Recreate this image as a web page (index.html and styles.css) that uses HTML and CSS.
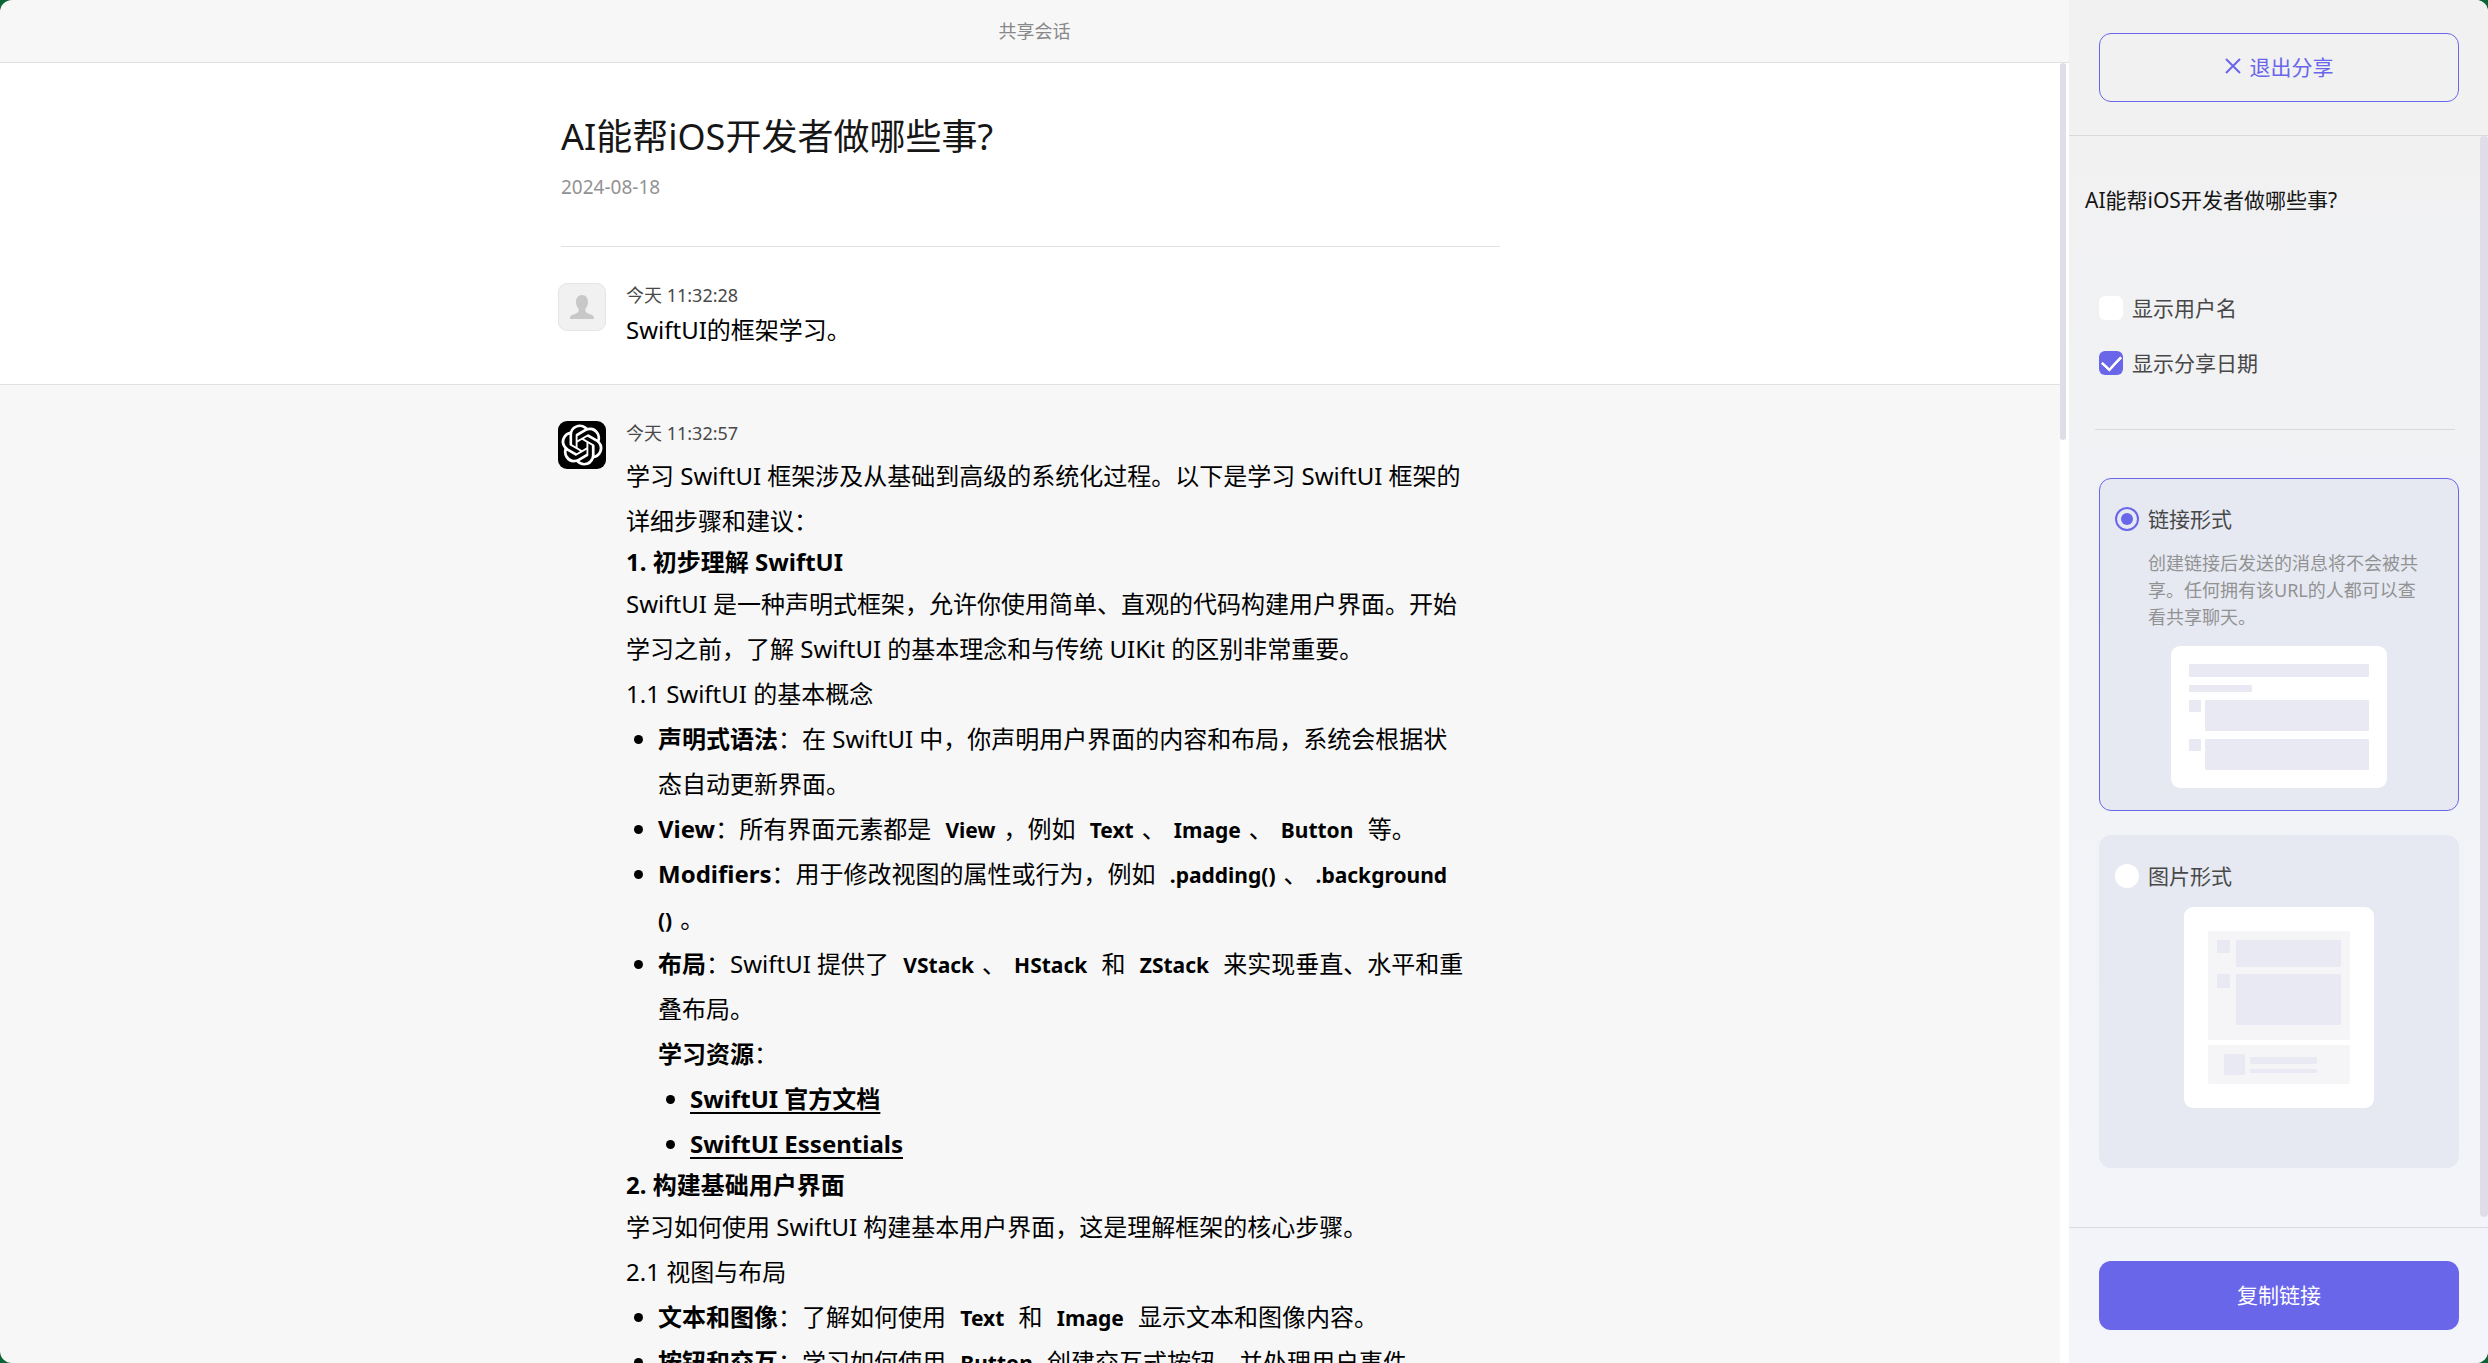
FILE: index.html
```
<!DOCTYPE html>
<html lang="zh-CN">
<head>
    <meta charset="UTF-8">
    <meta name="viewport" content="width=device-width, initial-scale=1.0">
    <title>共享会话</title>
    <link rel="stylesheet" href="styles.css">
</head>
<body>
    <div class="app">
        <main class="chat">
            <header class="chat-header">共享会话</header>
            <div class="chat-body">
                <div class="chat-scroll">
                    <section class="intro">
                        <div class="column">
                            <div class="headline">
                                <h1>AI能帮iOS开发者做哪些事?</h1>
                                <p class="date">2024-08-18</p>
                            </div>
                            <article class="message">
                                <svg class="avatar avatar-user" viewBox="1 1 46 46" aria-hidden="true">
                                    <path d="M24 12c3.600 0 6 2.900 6 6.800 0 3.200-1.200 5.600-2.600 7v2c0 1 .6 1.700 1.600 2.200l4.800 2.100c1.500.7 2.200 1.500 2.200 2.700v.7c0 .4-.2.500-.6.500H12.600c-.4 0-.6-.1-.6-.5v-.7c0-1.200.7-2 2.200-2.700l4.800-2.100c1-.5 1.600-1.200 1.600-2.200v-2c-1.400-1.400-2.600-3.800-2.600-7 0-3.900 2.400-6.800 6-6.800z"/>
                                </svg>
                                <div class="message-content">
                                    <p class="time">今天 11:32:28</p>
                                    <p class="question">SwiftUI的框架学习。</p>
                                </div>
                            </article>
                        </div>
                    </section>

                    <section class="reply">
                        <div class="column">
                            <article class="message">
                                <svg class="avatar avatar-bot" viewBox="-2 -2 28 28" aria-hidden="true">
                                    <path d="M22.2819 9.8211a5.9847 5.9847 0 0 0-.5157-4.9108 6.0462 6.0462 0 0 0-6.5098-2.9A6.0651 6.0651 0 0 0 4.9807 4.1818a5.9847 5.9847 0 0 0-3.9977 2.9 6.0462 6.0462 0 0 0 .7427 7.0966 5.98 5.98 0 0 0 .511 4.9107 6.051 6.051 0 0 0 6.5146 2.9001A5.9847 5.9847 0 0 0 13.2599 24a6.0557 6.0557 0 0 0 5.7718-4.2058 5.9894 5.9894 0 0 0 3.9977-2.9001 6.0557 6.0557 0 0 0-.7475-7.0729zm-9.022 12.6081a4.4755 4.4755 0 0 1-2.8764-1.0408l.1419-.0804 4.7783-2.7582a.7948.7948 0 0 0 .3927-.6813v-6.7369l2.02 1.1686a.071.071 0 0 1 .038.052v5.5826a4.504 4.504 0 0 1-4.4945 4.4944zm-9.6607-4.1254a4.4708 4.4708 0 0 1-.5346-3.0137l.142.0852 4.783 2.7582a.7712.7712 0 0 0 .7806 0l5.8428-3.3685v2.3324a.0804.0804 0 0 1-.0332.0615L9.74 19.9502a4.4992 4.4992 0 0 1-6.1408-1.6464zM2.3408 7.8956a4.485 4.485 0 0 1 2.3655-1.9728V11.6a.7664.7664 0 0 0 .3879.6765l5.8144 3.3543-2.0201 1.1685a.0757.0757 0 0 1-.071 0l-4.8303-2.7865A4.504 4.504 0 0 1 2.3408 7.872zm16.5963 3.8558L13.1038 8.364 15.1192 7.2a.0757.0757 0 0 1 .071 0l4.8303 2.7913a4.4944 4.4944 0 0 1-.6765 8.1042v-5.6772a.79.79 0 0 0-.407-.667zm2.0107-3.0231l-.142-.0852-4.7735-2.7818a.7759.7759 0 0 0-.7854 0L9.409 9.2297V6.8974a.0662.0662 0 0 1 .0284-.0615l4.8303-2.7866a4.4992 4.4992 0 0 1 6.6802 4.66zM8.3065 12.863l-2.02-1.1638a.0804.0804 0 0 1-.038-.0567V6.0742a4.4992 4.4992 0 0 1 7.3757-3.4537l-.142.0805L8.704 5.459a.7948.7948 0 0 0-.3927.6813zm1.0976-2.3654l2.602-1.4998 2.6069 1.4998v2.9994l-2.5974 1.4997-2.6067-1.4997Z"/>
                                </svg>
                                <div class="message-content">
                                    <p class="time">今天 11:32:57</p>
                                    <div class="markdown">
                                        <p>学习 SwiftUI 框架涉及从基础到高级的系统化过程。以下是学习 SwiftUI 框架的详细步骤和建议：</p>
                                        <h3>1. 初步理解 SwiftUI</h3>
                                        <p>SwiftUI 是一种声明式框架，允许你使用简单、直观的代码构建用户界面。开始学习之前，了解 SwiftUI 的基本理念和与传统 UIKit 的区别非常重要。</p>
                                        <p>1.1 SwiftUI 的基本概念</p>
                                        <ul>
                                            <li><strong>声明式语法</strong>：在 SwiftUI 中，你声明用户界面的内容和布局，系统会根据状态自动更新界面。</li>
                                            <li><strong>View</strong>：所有界面元素都是 <code>View</code>，例如 <code>Text</code>、<code>Image</code>、<code>Button</code> 等。</li>
                                            <li><strong>Modifiers</strong>：用于修改视图的属性或行为，例如 <code>.padding()</code>、<code>.background<wbr>()</code>。</li>
                                            <li><strong>布局</strong>：SwiftUI 提供了 <code>VStack</code>、<code>HStack</code> 和 <code>ZStack</code> 来实现垂直、水平和重叠布局。<br><strong>学习资源</strong>：
                                                <ul>
                                                    <li><a href="#">SwiftUI 官方文档</a></li>
                                                    <li><a href="#">SwiftUI Essentials</a></li>
                                                </ul>
                                            </li>
                                        </ul>
                                        <h3>2. 构建基础用户界面</h3>
                                        <p>学习如何使用 SwiftUI 构建基本用户界面，这是理解框架的核心步骤。</p>
                                        <p>2.1 视图与布局</p>
                                        <ul>
                                            <li><strong>文本和图像</strong>：了解如何使用 <code>Text</code> 和 <code>Image</code> 显示文本和图像内容。</li>
                                            <li><strong>按钮和交互</strong>：学习如何使用 <code>Button</code> 创建交互式按钮，并处理用户事件。</li>
                                        </ul>
                                    </div>
                                </div>
                            </article>
                        </div>
                    </section>
                </div>
                <div class="chat-track"><div class="thumb"></div></div>
            </div>
        </main>

        <aside class="share">
            <div class="share-top">
                <button type="button" class="btn btn-outline">
                    <svg class="icon-close" viewBox="0 0 16 16" aria-hidden="true"><path d="M1 1l14 14M15 1L1 15"/></svg>
                    退出分享
                </button>
            </div>

            <form class="share-body">
                <h2>AI能帮iOS开发者做哪些事?</h2>

                <div class="checks">
                    <label><input type="checkbox" name="show-name">显示用户名</label>
                    <label><input type="checkbox" name="show-date" checked>显示分享日期</label>
                </div>

                <label class="option">
                    <span class="option-name"><input type="radio" name="format" value="link" checked>链接形式</span>
                    <span class="option-text">创建链接后发送的消息将不会被共享。任何拥有该URL的人都可以查看共享聊天。</span>
                    <svg class="preview" width="216" height="142" viewBox="0 0 216 142" aria-hidden="true">
                        <rect class="paper" width="216" height="142" rx="9"/>
                        <rect x="18" y="18" width="180" height="13" rx="1"/>
                        <rect x="18" y="39" width="63" height="7" rx="1"/>
                        <rect x="18" y="54" width="12" height="12" rx="1"/>
                        <rect x="34" y="54" width="164" height="31" rx="1"/>
                        <rect x="18" y="93" width="12" height="12" rx="1"/>
                        <rect x="34" y="93" width="164" height="31" rx="1"/>
                    </svg>
                </label>

                <label class="option">
                    <span class="option-name"><input type="radio" name="format" value="image">图片形式</span>
                    <svg class="preview" width="190" height="201" viewBox="0 0 190 201" aria-hidden="true">
                        <rect class="paper" width="190" height="201" rx="9"/>
                        <rect class="panel" x="24" y="24" width="142" height="109" rx="2"/>
                        <rect x="33" y="33" width="13" height="13" rx="1"/>
                        <rect x="52" y="33" width="105" height="27" rx="1"/>
                        <rect x="33" y="67" width="13" height="14" rx="1"/>
                        <rect x="52" y="67" width="105" height="51" rx="1"/>
                        <rect class="panel" x="24" y="138" width="142" height="39" rx="2"/>
                        <rect x="40" y="147" width="21" height="21" rx="1"/>
                        <rect x="66" y="150" width="67" height="7" rx="1"/>
                        <rect x="66" y="162" width="67" height="4" rx="1"/>
                    </svg>
                </label>

                <div class="share-track"><div class="thumb"></div></div>
            </form>

            <div class="share-bottom">
                <button type="button" class="btn btn-primary">复制链接</button>
            </div>
        </aside>
    </div>
</body>
</html>
```

FILE: styles.css
```
* {
    box-sizing: border-box;
}
body {
    margin: 0;
    background-color: #0b6433;
    color: #000;
    font-family: "Noto Sans", "Noto Sans CJK SC", sans-serif;
    font-size: 21px;
}
h1, h2, h3, p, ul {
    margin: 0;
}
.app {
    display: flex;
    height: 100vh;
    border-radius: 12px;
    overflow: hidden;
    background-color: #f7f7f7;
}

/* conversation */
.chat {
    flex: 1;
    min-width: 0;
    display: flex;
    flex-direction: column;
}
.chat-header {
    height: 63px;
    flex: none;
    border-bottom: 1px solid #e2e2e2;
    color: #888;
    font-size: 18px;
    line-height: 62px;
    text-align: center;
}
.chat-body {
    flex: 1;
    min-height: 0;
    display: flex;
}
.chat-scroll {
    flex: 1;
    overflow: hidden;
}
.chat-track {
    width: 9px;
    padding-right: 3px;
    background-color: #fff;
}
.thumb {
    border-radius: 4px;
    background-color: #dfdee8;
}
.chat-track .thumb {
    height: 29%;
}
.column {
    max-width: 944px;
    margin: 0 auto;
}
.intro {
    background-color: #fff;
    border-bottom: 1px solid #e2e2e2;
    padding: 49px 0 32px;
}
.headline {
    margin: 0 2px 36px 3px;
    padding-bottom: 44px;
    border-bottom: 1px solid #e2e2e2;
}
h1 {
    color: #161616;
    font-size: 36px;
    font-weight: 400;
    line-height: 50px;
}
.date {
    margin-top: 12px;
    color: #929292;
    font-size: 19px;
    line-height: 26px;
    padding-bottom: 2px;
}
.message {
    display: flex;
    gap: 20px;
}
.message-content {
    flex: 1;
    padding-right: 32px;
}
.avatar {
    width: 48px;
    height: 48px;
    flex: none;
    border-radius: 9px;
}
.avatar-user {
    background-color: #f1f1f1;
    border: 1px solid #e5e5e5;
    fill: #c8c8c8;
}
.avatar-bot {
    background-color: #000;
    fill: #fff;
}
.time {
    color: #484848;
    font-size: 18px;
    line-height: 24px;
}
.question {
    font-size: 24px;
    line-height: 45px;
}
.reply {
    padding-top: 36px;
}
.markdown {
    margin-top: 8px;
    font-size: 24px;
    line-height: 45px;
}
.markdown h3 {
    font-size: 24px;
    line-height: 38px;
}
.markdown ul {
    padding-left: 32px;
}
.markdown ul ul {
    list-style: disc;
}
.markdown code {
    padding: 0 8px;
    font-family: inherit;
    font-size: 21px;
    font-weight: 700;
    line-height: 1;
}
.markdown a {
    color: #000;
    font-weight: 700;
    text-underline-offset: 4px;
}

/* share panel */
.share {
    width: 419px;
    flex: none;
    display: flex;
    flex-direction: column;
    background: linear-gradient(#f1f1f1, #f1f2f5 40%, #f4f5fb);
}
.share-top {
    padding: 33px 29px 33px 30px;
    border-bottom: 1px solid #dadade;
}
.share-bottom {
    padding: 33px 29px 33px 30px;
    border-top: 1px solid #dadade;
}
.btn {
    display: flex;
    align-items: center;
    justify-content: center;
    gap: 9px;
    width: 100%;
    height: 69px;
    padding: 0 0 3px;
    border-radius: 12px;
    font: inherit;
    cursor: pointer;
}
.btn-outline {
    border: 1px solid #6966ea;
    background: none;
    color: #6966ea;
}
.btn-primary {
    border: none;
    background-color: #6966ea;
    color: #fff;
}
.icon-close {
    width: 16px;
    height: 16px;
    fill: none;
    stroke: currentColor;
    stroke-width: 2;
}
.share-body {
    position: relative;
    flex: 1;
    min-height: 0;
    padding: 48px 29px 0 30px;
}
h2 {
    margin-left: -14px;
    color: #161616;
    font-size: 21px;
    font-weight: 400;
    line-height: 32px;
}
.checks {
    display: flex;
    flex-direction: column;
    gap: 23px;
    margin: 0 4px 48px -4px;
    padding: 76px 0 50px 4px;
    border-bottom: 1px solid #dadade;
}
.checks label, .option-name {
    display: flex;
    align-items: center;
    gap: 9px;
    color: #484848;
    line-height: 32px;
}
input {
    appearance: none;
    display: grid;
    place-items: center;
    width: 24px;
    height: 24px;
    margin: 0;
    background-color: #fff;
}
input[type="checkbox"] {
    border-radius: 6px;
}
input[type="checkbox"]:checked {
    background-color: #6966ea;
}
input[type="checkbox"]:checked::before {
    content: "";
    width: 16px;
    height: 9px;
    margin-bottom: 5px;
    border: solid #fff;
    border-width: 0 0 3px 3px;
    border-radius: 1px;
    transform: rotate(-47deg);
}
input[type="radio"] {
    border-radius: 50%;
}
input[type="radio"]:checked {
    border: 2px solid #6966ea;
    background-color: transparent;
}
input[type="radio"]:checked::before {
    content: "";
    width: 12px;
    height: 12px;
    border-radius: 50%;
    background-color: #6966ea;
}
.option {
    display: flex;
    flex-direction: column;
    height: 333px;
    margin-bottom: 24px;
    padding: 24px 15px 0;
    border: 1px solid #e6e9f2;
    border-radius: 12px;
    background-color: #e6e9f2;
}
.option:has(:checked) {
    border-color: #6966ea;
}
.option-text {
    margin: 15px 25px 0 33px;
    color: #929292;
    font-size: 18px;
    line-height: 27px;
}
.preview {
    align-self: center;
    margin-top: 15px;
    fill: #e8e9f2;
}
.preview .paper {
    fill: #fff;
}
.preview .panel {
    fill: #f5f5f8;
}
.share-track {
    position: absolute;
    top: 0;
    right: 0;
    bottom: 10px;
    width: 8px;
}
.share-track .thumb {
    height: 100%;
}
```
